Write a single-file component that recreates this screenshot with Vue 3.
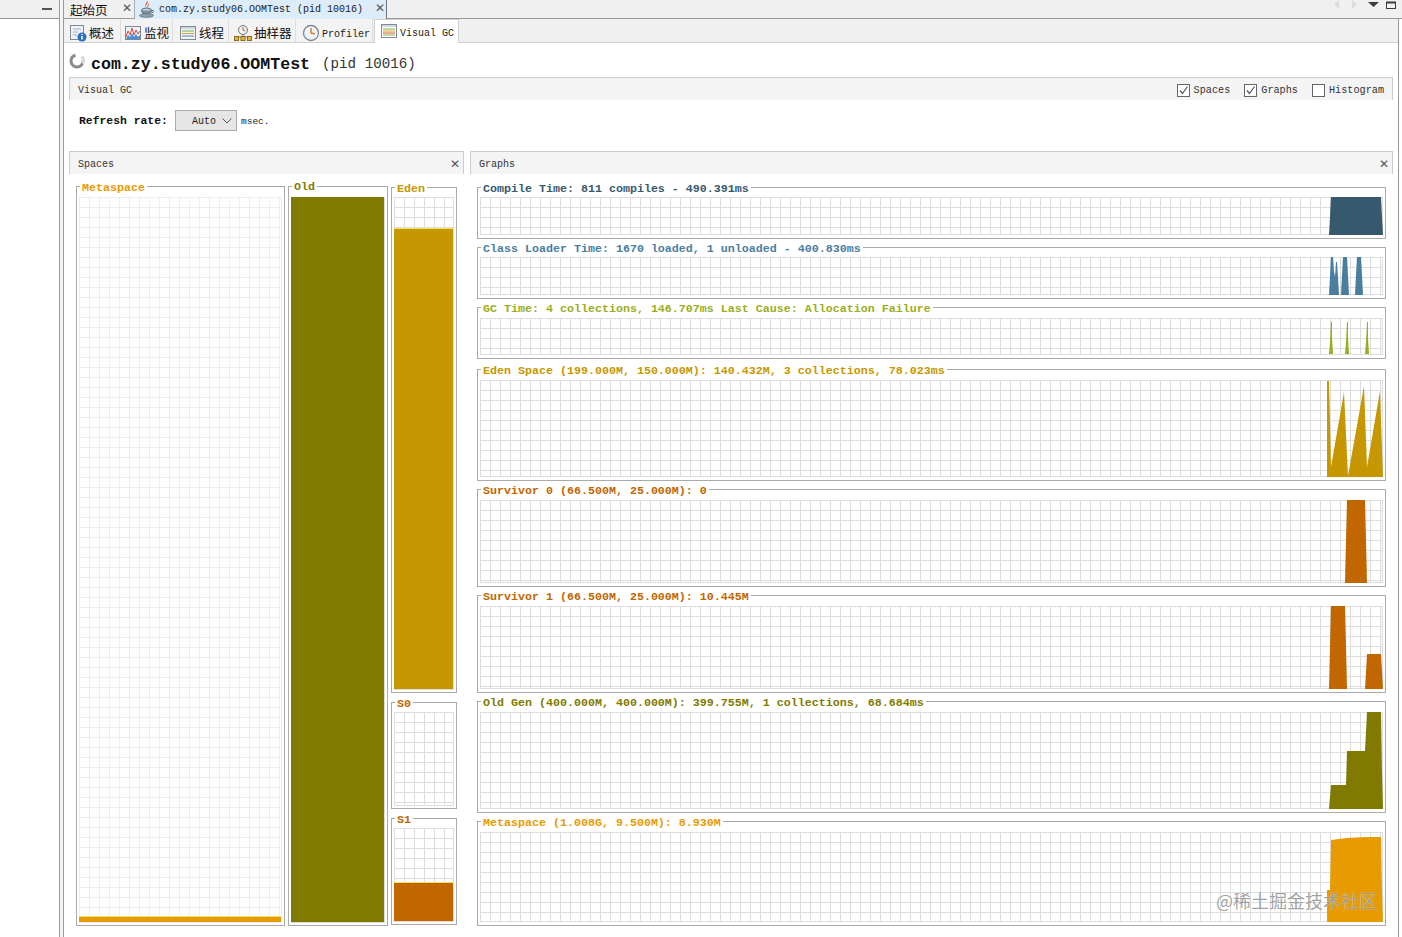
<template>
  <div class="root">
    <aside class="side">
      <div class="side-head"><span class="dash"></span></div>
    </aside>
    <div class="gutter"></div>
    <main class="main">
      <div class="doc-tabs">
        <div class="doc-tab">
          <span class="cjk start">起始页</span>
          <span class="x">✕</span>
        </div>
        <div class="doc-tab active">
          <svg class="cup" width="16" height="17" viewBox="0 0 16 17">
            <path d="M8.500 0c1.500 2.500-2.500 3.500-1.200 6.500C6 5 6 3.500 8.500 0zM10 2.500c.8 1.800-1.500 2.500-1 4.500-1-1.500-.5-3 1-4.500z" fill="#d0541a" />
            <ellipse cx="7.500" cy="9" rx="5" ry="2" fill="#c3ced8" stroke="#56677a" />
            <path d="M2.500 9.500c.5 3 2.500 4 5 4s4.500-1 5-4" fill="#7d90a3" stroke="#56677a" />
            <path d="M12.500 9.500h1.500c1 0 1 2-1.500 2.500" fill="none" stroke="#56677a" />
            <ellipse cx="7.500" cy="14.500" rx="7" ry="1.800" fill="#8fa0b0" stroke="#56677a" stroke-width=".7" />
          </svg>
          <span class="mono">com.zy.study06.OOMTest (pid 10016)</span>
          <span class="x">✕</span>
        </div>
        <div class="win-btns">
          <svg width="71" height="12" viewBox="0 0 71 12">
            <path d="M8 0v9L3 4.500z" fill="#dcdcdc" />
            <path d="M21 0v9l5-4.500z" fill="#dcdcdc" />
            <path d="M37 2h11l-5.500 5z" fill="#3c3c3c" />
            <rect x="55.500" y="2.500" width="9" height="6" fill="none" stroke="#3c3c3c" />
            <path d="M55 2.500h10" stroke="#3c3c3c" stroke-width="2" />
          </svg>
        </div>
      </div>

      <div class="pane">
        <div class="sub-tabs">
          <div
            v-for="t in subTabs"
            :key="t.name"
            class="sub-tab"
            :style="{ width: t.w + 'px', paddingLeft: t.pad + 'px' }"
          >
            <svg width="18" height="18" viewBox="0 0 18 18" v-html="t.icon"></svg>
            <span :class="t.cjk ? 'cjk sub-cjk' : 'mono low'">{{ t.name }}</span>
          </div>
          <div class="sub-tab active">
            <svg class="active-icon" width="18" height="18" viewBox="0 0 18 18">
              <rect x="1.500" y="1.500" width="15" height="13" fill="#fff" stroke="#7d8a96" />
              <path d="M2 2h14v2H2z" fill="#cfd8e0" />
              <path d="M3 6h12" stroke="#7fb24a" />
              <path d="M3 8h12" stroke="#d8a02c" />
              <path d="M3 10h12" stroke="#d8562c" />
              <path d="M3 12h12" stroke="#7fb24a" />
            </svg>
            <span class="mono">Visual GC</span>
          </div>
        </div>

        <div class="app-title">
          <svg class="spin" width="16" height="16" viewBox="0 0 16 16">
            <circle cx="8" cy="8" r="6" fill="none" stroke="#8a8a8a" stroke-width="3" stroke-dasharray="26 12" />
            <path d="M13 3.500a6.500 6.500 0 0 1 .5 7" fill="none" stroke="#d8d8d8" stroke-width="3" />
          </svg>
          <b>com.zy.study06.OOMTest</b>
          <span>(pid 10016)</span>
        </div>

        <div class="bar top-bar">
          <span>Visual GC</span>
          <div class="checks">
            <label v-for="c in checks" :key="c.name" class="check">
              <span class="box">
                <svg v-if="c.on" width="11" height="11" viewBox="0 0 11 11">
                  <path d="M2 5.500l2.500 3L9.500 1.500" fill="none" stroke="#555" stroke-width="1.200" />
                </svg>
              </span>
              {{ c.name }}
            </label>
          </div>
        </div>

        <div class="refresh">
          <b>Refresh rate:</b>
          <div class="combo">
            <span>Auto</span>
            <svg width="10" height="6" viewBox="0 0 10 6"><path d="M.5.500L5 5 9.500.500" fill="none" stroke="#555" /></svg>
          </div>
          <span class="msec">msec.</span>
        </div>

        <div class="sections">
          <section class="spaces">
            <div class="bar sec-bar"><span>Spaces</span><span class="sec-x">✕</span></div>
            <div class="spaces-body">
              <div class="titled meta-box">
                <span class="title" style="color: #e79b00">Metaspace</span>
                <div class="plot faint">
                  <div class="fill" style="height: 6px; background: #e79b00"></div>
                </div>
              </div>
              <div class="titled old-box">
                <span class="title old-title" style="color: #807b00">Old</span>
                <div class="plot">
                  <div class="fill full" style="background: #807b00"></div>
                </div>
              </div>
              <div class="young">
                <div class="titled eden-box">
                  <span class="title" style="color: #c69700">Eden</span>
                  <div class="plot">
                    <div class="fill" style="height: 461px; background: #c69700"></div>
                  </div>
                </div>
                <div class="titled surv-box">
                  <span class="title" style="color: #c26600">S0</span>
                  <div class="plot"></div>
                </div>
                <div class="titled surv-box">
                  <span class="title" style="color: #c26600">S1</span>
                  <div class="plot">
                    <div class="fill" style="height: 39px; background: #c26600"></div>
                  </div>
                </div>
              </div>
            </div>
          </section>

          <section class="graphs">
            <div class="bar sec-bar"><span>Graphs</span><span class="sec-x">✕</span></div>
            <div class="graphs-body">
              <div
                v-for="g in graphs"
                :key="g.title"
                class="titled graph"
                :class="{ tight: g.tight, spaced: g.spaced }"
              >
                <span class="title" :style="{ color: g.color }">{{ g.title }}</span>
                <div class="plot" :style="{ height: g.h + 'px' }">
                  <svg class="chart" width="903" :height="g.h" :viewBox="`0 0 903 ${g.h}`">
                    <polygon
                      v-for="(p, i) in g.shapes"
                      :key="i"
                      :points="p"
                      :fill="g.color"
                    />
                  </svg>
                </div>
              </div>
            </div>
          </section>
        </div>
      </div>
    </main>
    <div class="watermark">@稀土掘金技术社区</div>
  </div>
</template>

<script setup>
const infoIcon = `
  <rect x="1.500" y="1.500" width="13" height="14" fill="#eef3f8" stroke="#7d8a96"/>
  <path d="M4 5h8M4 8h5M4 11h4" stroke="#9fb0c0"/>
  <circle cx="13" cy="13" r="4.500" fill="#2b6fc0"/>
  <path d="M13 12v3.500M13 10v1" stroke="#fff" stroke-width="1.500"/>`
const monitorIcon = `
  <rect x="1.500" y="2.500" width="15" height="13" fill="#eef3f8" stroke="#7d8a96"/>
  <path d="M2 13l2-6 2 4 2-7 2 7 2-5 2 4 2-3" fill="none" stroke="#d84a3c"/>
  <path d="M2 15l2-4 2 2 2-4 2 4 2-3 2 3 2-2v4H2z" fill="#4a90d8"/>`
const threadIcon = `
  <rect x="1.500" y="2.500" width="15" height="13" fill="#eef3f8" stroke="#7d8a96"/>
  <path d="M2 3h14v2H2z" fill="#cfd8e0"/>
  <path d="M3 7h12" stroke="#7fb24a"/>
  <path d="M3 9.500h12" stroke="#d8a02c"/>
  <path d="M3 12h12" stroke="#5c84b0"/>`
const samplerIcon = `
  <circle cx="9" cy="6" r="4.500" fill="#eef0f2" stroke="#6e7b88"/>
  <path d="M9 6V3M9 6l2 1" stroke="#c8561c"/>
  <path d="M9 10v3M3 13h12" stroke="#6e7b88"/>
  <rect x=".5" y="12.500" width="4" height="4" fill="#e8b23c" stroke="#8a6a1c"/>
  <rect x="7" y="12.500" width="4" height="4" fill="#e8b23c" stroke="#8a6a1c"/>
  <rect x="13.500" y="12.500" width="4" height="4" fill="#e8b23c" stroke="#8a6a1c"/>`
const clockIcon = `
  <circle cx="9" cy="9" r="7.500" fill="#eef3f8" stroke="#7d8a96" stroke-width="1.300"/>
  <path d="M9 4v5l4 1" fill="none" stroke="#d8802c" stroke-width="1.500"/>`

const subTabs = [
  { name: '概述', w: 55, pad: 3, cjk: true, icon: infoIcon },
  { name: '监视', w: 52, pad: 3, cjk: true, icon: monitorIcon },
  { name: '线程', w: 56, pad: 6, cjk: true, icon: threadIcon },
  { name: '抽样器', w: 67, pad: 5, cjk: true, icon: samplerIcon },
  { name: 'Profiler', w: 77, pad: 6, cjk: false, icon: clockIcon },
]

const checks = [
  { name: 'Spaces', on: true },
  { name: 'Graphs', on: true },
  { name: 'Histogram', on: false },
]

// chart outlines, in pixels inside each 903 wide plot
const graphs = [
  {
    title: 'Compile Time: 811 compiles - 490.391ms',
    color: '#37596d',
    h: 38,
    tight: true,
    shapes: ['849,38 850,20 851,0 901,0 902,20 903,38'],
  },
  {
    title: 'Class Loader Time: 1670 loaded, 1 unloaded - 400.830ms',
    color: '#4a7d9e',
    h: 38,
    tight: true,
    shapes: [
      '849,38 850,20 851,0 853,0 854,14 855,20 856,5 857,5 858,20 859,38',
      '861,38 862,18 863,0 867,0 868,18 869,38',
      '875,38 876,18 877,0 881,0 882,18 883,38',
    ],
  },
  {
    title: 'GC Time: 4 collections, 146.707ms Last Cause: Allocation Failure',
    color: '#9bad1e',
    h: 37,
    shapes: [
      '849,36 850,24 851,4 852,4 852,20 853,36',
      '865,36 866,24 867,4 868,4 868,20 869,36',
      '885,36 886,24 887,4 888,4 888,20 889,36',
    ],
  },
  {
    title: 'Eden Space (199.000M, 150.000M): 140.432M, 3 collections, 78.023ms',
    color: '#c69700',
    h: 97,
    spaced: true,
    shapes: ['847,97 847,1 849,1 851,87 864,12 868,96 884,6 887,87 900,11 903,97'],
  },
  {
    title: 'Survivor 0 (66.500M, 25.000M): 0',
    color: '#c26600',
    h: 83,
    shapes: ['865,83 866,40 867,0 885,0 886,40 887,83'],
  },
  {
    title: 'Survivor 1 (66.500M, 25.000M): 10.445M',
    color: '#c26600',
    h: 83,
    shapes: ['849,83 850,40 851,0 865,0 866,40 867,83', '885,83 886,66 887,48 901,48 902,66 903,83'],
  },
  {
    title: 'Old Gen (400.000M, 400.000M): 399.755M, 1 collections, 68.684ms',
    color: '#807b00',
    h: 97,
    shapes: ['849,97 851,73 866,73 867,39 885,39 887,0 901,0 902,61 903,97'],
  },
  {
    title: 'Metaspace (1.008G, 9.500M): 8.930M',
    color: '#e79b00',
    h: 90,
    shapes: ['847,90 847,58 850,58 851,8 867,6 886,5 901,5 902,58 903,90'],
  },
]
</script>

<style>
html,
body {
  margin: 0;
  overflow: hidden;
  background: #fff;
}
</style>

<style scoped>
.root {
  position: relative;
  display: flex;
  width: 1402px;
  height: 937px;
  overflow: hidden;
  background: #fff;
  color: #222;
  font-family: "Liberation Mono", monospace;
  font-size: 10px;
}

.side {
  width: 59px;
  flex: none;
  border-right: 1px solid #999;
}

.side-head {
  height: 19px;
  box-sizing: border-box;
  display: flex;
  align-items: center;
  justify-content: flex-end;
  padding-right: 7px;
  background: #f0f0f0;
  border-bottom: 1px solid #999;
}

.dash {
  width: 10px;
  height: 2px;
  background: #555;
}

.gutter {
  width: 3px;
  flex: none;
  background: #f4f4f4;
}

.main {
  flex: 1;
  display: flex;
  flex-direction: column;
  min-width: 0;
}

.doc-tabs {
  height: 19px;
  display: flex;
  flex: none;
  background: #f0f0f0;
  border-left: 1px solid #999;
}

.doc-tab {
  display: flex;
  align-items: center;
  width: 70px;
  box-sizing: border-box;
  padding-left: 6px;
  border-bottom: 1px solid #999;
}

.doc-tab.active {
  width: 253px;
  padding-left: 4px;
  background: #dcecf9;
  border-left: 1px solid #aaa;
  border-right: 1px solid #777;
  border-bottom: none;
}

.start {
  font-size: 12.500px;
  width: 52px;
}

.cup {
  margin-right: 4px;
}

.doc-tab .mono {
  width: 216px;
}

.x {
  font: 12px "DejaVu Sans", sans-serif;
  color: #555;
  margin-top: -3px;
}

.cjk {
  font-family: "Noto Sans CJK SC", sans-serif;
  color: #111;
}

.win-btns {
  flex: 1;
  display: flex;
  justify-content: flex-end;
  border-bottom: 1px solid #999;
}

.pane {
  flex: 1;
  border-left: 1px solid #999;
  border-right: 1px solid #999;
  margin-right: 3px;
  display: flex;
  flex-direction: column;
  min-height: 0;
}

.sub-tabs {
  height: 24px;
  flex: none;
  display: flex;
  align-items: flex-end;
  box-sizing: border-box;
  padding-left: 2px;
  background: #f0f0f0;
  border-bottom: 1px solid #d0d0d0;
}

.sub-tab {
  height: 23px;
  box-sizing: border-box;
  display: flex;
  align-items: center;
  gap: 2px;
  padding-top: 4px;
  background: #f3f3f3;
  border-right: 1px solid #ddd;
}

.sub-cjk {
  font-size: 12.500px;
}

.low {
  padding-top: 3px;
}

.sub-tab.active {
  width: 85px;
  height: 24px;
  margin: 0 0 -1px 1px;
  padding: 4px 0 0 5px;
  background: #fff;
  border: 1px solid #d0d0d0;
  border-bottom: none;
}

.active-icon {
  margin-top: -4px;
}

.app-title {
  height: 34px;
  flex: none;
  display: flex;
  align-items: center;
  padding: 8px 0 0 5px;
  box-sizing: border-box;
  font-size: 14.200px;
  color: #333;
}

.app-title .spin {
  margin: -6px 6px 0 0;
}

.app-title b {
  font-size: 16.600px;
  color: #111;
  margin-right: 12px;
}

.bar {
  display: flex;
  align-items: center;
  justify-content: space-between;
  box-sizing: border-box;
  height: 23px;
  padding: 2px 8px 0;
  background: #f4f4f4;
  border: 1px solid #ccc;
  border-bottom: none;
  color: #333;
}

.top-bar {
  margin: 0 5px;
  flex: none;
}

.checks {
  display: flex;
  gap: 14px;
}

.check {
  display: flex;
  align-items: center;
  gap: 4px;
  font-size: 10.200px;
}

.box {
  width: 13px;
  height: 13px;
  box-sizing: border-box;
  border: 1px solid #666;
  background: #fff;
  display: flex;
  align-items: center;
  justify-content: center;
}

.refresh {
  flex: none;
  display: flex;
  align-items: center;
  height: 21px;
  margin: 10px 0 20px 15px;
}

.refresh b {
  font-size: 11.400px;
  color: #111;
  width: 96px;
  padding-top: 1px;
}

.combo {
  width: 62px;
  height: 21px;
  box-sizing: border-box;
  display: flex;
  align-items: center;
  justify-content: flex-end;
  gap: 6px;
  padding: 1px 4px 0 0;
  background: #e6e6e6;
  border: 1px solid #aaa;
}

.msec {
  margin-left: 4px;
  padding-top: 1px;
  font-size: 9.500px;
}

.sections {
  flex: 1;
  display: flex;
  gap: 6px;
  margin: 0 5px;
  min-height: 0;
}

.spaces {
  width: 395px;
  flex: none;
}

.graphs {
  flex: 1;
  min-width: 0;
}

.sec-bar {
  padding-right: 3px;
}

.sec-x {
  font: 12px "DejaVu Sans", sans-serif;
  color: #555;
}

.spaces-body {
  display: flex;
  gap: 3px;
  padding: 12px 0 0 7px;
}

.titled {
  position: relative;
  box-sizing: border-box;
  border: 1px solid #aaa;
  padding: 9px 2px 2px;
}

.title {
  position: absolute;
  top: -5px;
  left: 3px;
  padding: 0 2px;
  background: #fff;
  font-weight: 700;
  font-size: 11.670px;
  line-height: 13px;
  white-space: pre;
}

.old-title {
  top: -6px;
}

.plot {
  position: relative;
  box-sizing: border-box;
  overflow: hidden;
  height: 100%;
  background-image: linear-gradient(#ddd 1px, transparent 1px),
    linear-gradient(90deg, #ddd 1px, transparent 1px);
  background-size: 10px 10px;
  border-right: 1px solid #ddd;
  border-bottom: 1px solid #ddd;
}

.plot.faint {
  background-image: linear-gradient(#eee 1px, transparent 1px),
    linear-gradient(90deg, #eee 1px, transparent 1px);
  border-color: #eee;
}

.fill {
  position: absolute;
  left: 0;
  right: -1px;
  bottom: -1px;
  box-shadow: 0 -1px 0 #f2e26a;
}

.fill.full {
  top: 0;
  box-shadow: none;
}

.meta-box {
  width: 209px;
  height: 740px;
  padding-top: 10px;
}

.old-box {
  width: 100px;
  height: 740px;
  padding-top: 10px;
}

.young {
  width: 66px;
  display: flex;
  flex-direction: column;
  gap: 9px;
  margin-top: 1px;
}

.eden-box {
  height: 506px;
}

.surv-box {
  height: 107px;
}

.graphs-body {
  display: flex;
  flex-direction: column;
  gap: 8px;
  padding: 13px 7px 0;
}

.graph {
  padding: 10px 2px 3px;
}

.graph.tight {
  padding-top: 9px;
}

.graph.spaced {
  margin-top: 2px;
}

.graph .plot {
  flex: none;
  border: none;
  box-shadow: inset -1px -1px 0 #ddd;
}

.chart {
  position: absolute;
  top: 0;
  left: 0;
  display: block;
}

.watermark {
  position: absolute;
  left: 1216px;
  top: 887px;
  font: 18px "Noto Sans CJK SC", sans-serif;
  color: rgba(80, 80, 80, 0.55);
  text-shadow: 0 0 1px #fff;
  white-space: nowrap;
}
</style>
